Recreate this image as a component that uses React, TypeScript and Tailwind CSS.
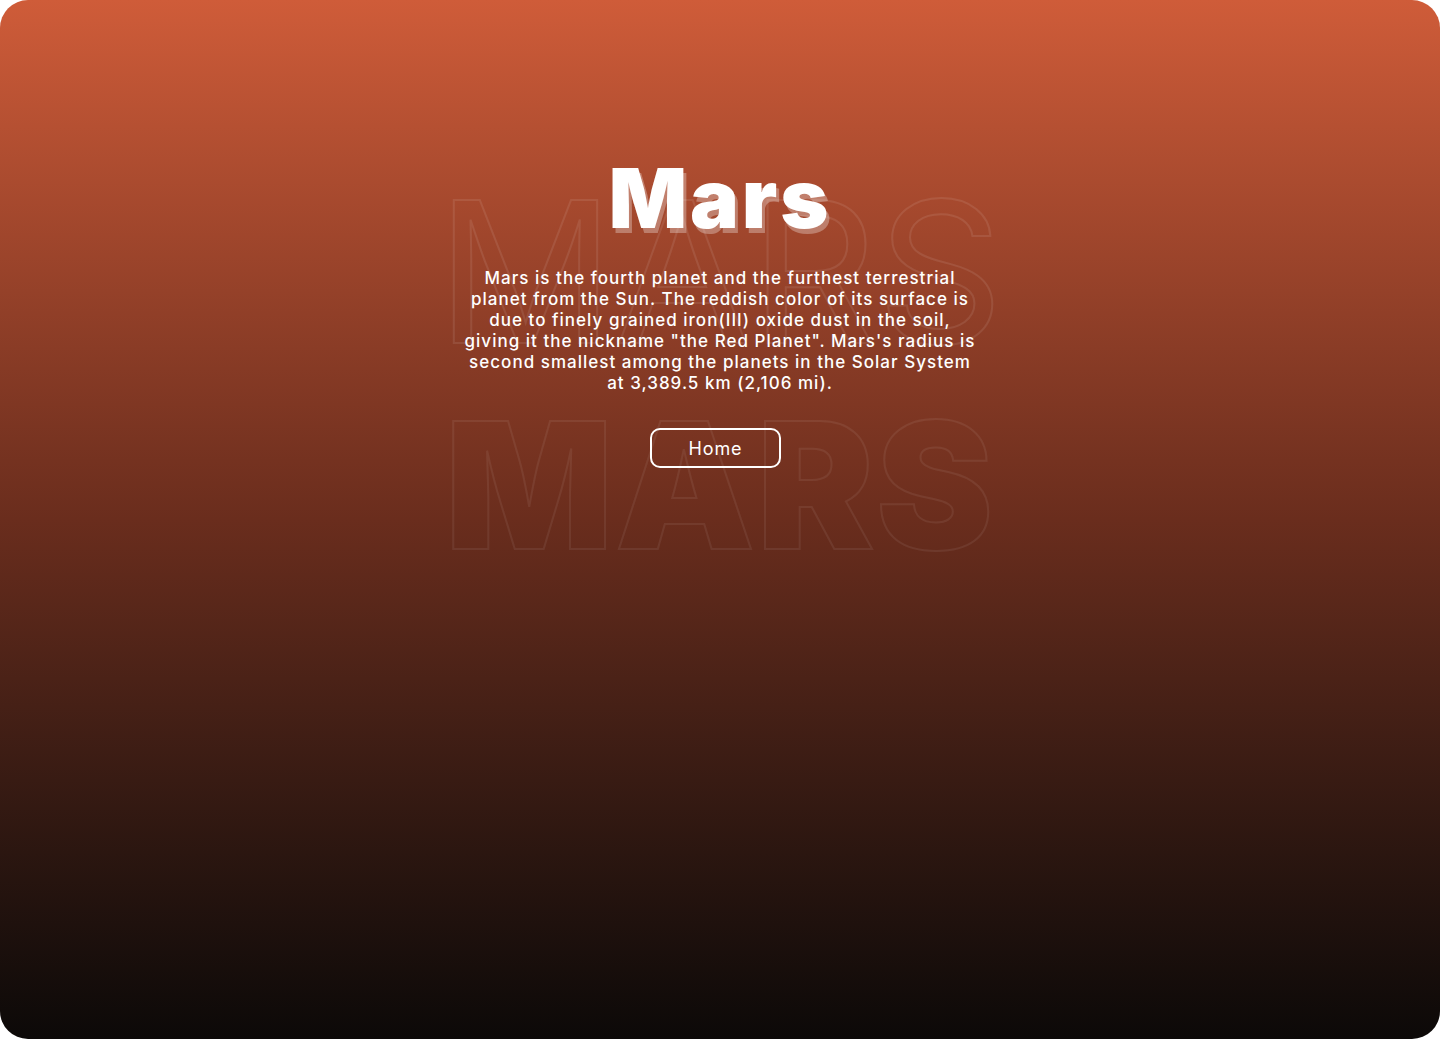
export default function App() {
  return (
    <div className="bg-white">
      <div
        className="relative h-[1039px] w-full overflow-hidden rounded-[28px] bg-gradient-to-b from-[#cf5c39] via-[#6a2d1d] to-[#0c0908]"
        style={{ fontFamily: 'Inter, "Noto Sans", sans-serif' }}
      >
        {/* outlined backdrop words */}
        <div
          className="pointer-events-none absolute left-0 right-0 top-[173px] text-center text-[197px] font-normal leading-none text-transparent select-none"
          style={{ WebkitTextStroke: '2px rgba(255,255,255,0.09)' }}
        >
          MARS
        </div>
        <div
          className="pointer-events-none absolute left-0 right-0 top-[397px] text-center text-[176px] font-black leading-none tracking-[0.01em] text-transparent select-none"
          style={{ WebkitTextStroke: '2px rgba(255,255,255,0.07)' }}
        >
          MARS
        </div>

        <div className="relative flex flex-col items-center pt-[158px]">
          <h1 className="text-[82px] font-black leading-none tracking-[0.035em] text-white [text-shadow:3px_5px_0_rgba(255,255,255,0.3)]">
            Mars
          </h1>
          <p className="mt-[28px] w-[522px] text-center text-[17px] font-medium leading-[21px] tracking-[0.06em] text-white">
            Mars is the fourth planet and the furthest terrestrial planet from the Sun. The reddish color of its surface is due to finely grained iron(III) oxide dust in the soil, giving it the nickname "the Red Planet". Mars's radius is second smallest among the planets in the Solar System at 3,389.5 km (2,106 mi).
          </p>
          <button className="mr-[9px] mt-[34px] h-[40px] w-[131px] rounded-[10px] border-2 border-white text-[18px] font-normal tracking-[0.05em] text-white">
            Home
          </button>
        </div>
      </div>
    </div>
  );
}
